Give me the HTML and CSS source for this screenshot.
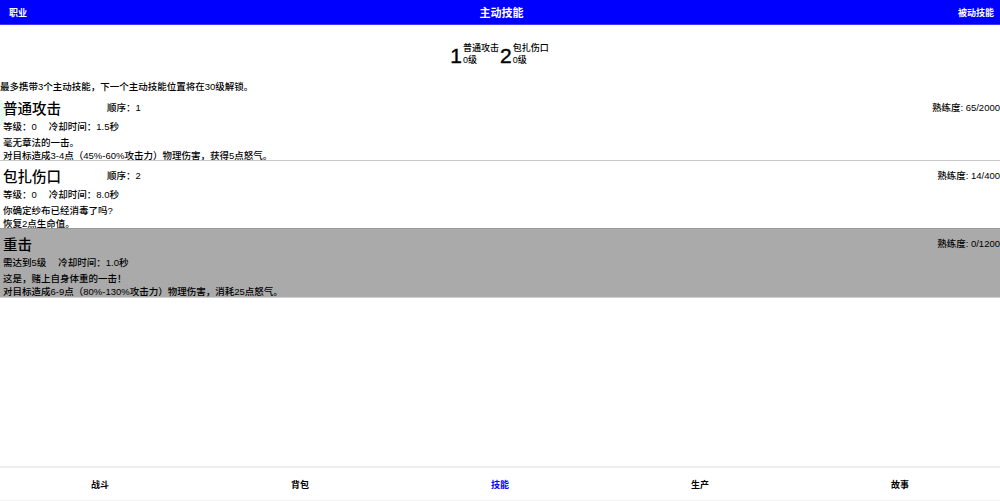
FILE: index.html
```html
<!DOCTYPE html>
<html lang="zh">
<head>
<meta charset="utf-8">
<link rel="stylesheet" href="styles.css">
</head>
<body>
<div class="app">
  <header class="topbar">
    <span class="tb-side">职业</span>
    <span class="tb-title">主动技能</span>
    <span class="tb-side">被动技能</span>
  </header>
  <div class="slots">
    <div class="slot">
      <span class="slot-num">1</span>
      <span class="slot-info"><span class="slot-name">普通攻击</span><span class="slot-lv">0级</span></span>
    </div>
    <div class="slot">
      <span class="slot-num">2</span>
      <span class="slot-info"><span class="slot-name">包扎伤口</span><span class="slot-lv">0级</span></span>
    </div>
  </div>
  <p class="notice">最多携带3个主动技能，下一个主动技能位置将在30级解锁。</p>
  <div class="skills">
    <section class="skill">
      <span class="ripple"></span>
      <div class="skill-head">
        <span class="skill-name">普通攻击</span>
        <span class="skill-order">顺序：1</span>
        <span class="skill-exp">熟练度: 65/2000</span>
      </div>
      <div class="skill-meta"><span>等级：0</span><span>冷却时间：1.5秒</span></div>
      <div class="skill-desc">毫无章法的一击。</div>
      <div class="skill-desc">对目标造成3-4点（45%-60%攻击力）物理伤害，获得5点怒气。</div>
    </section>
    <section class="skill">
      <div class="skill-head">
        <span class="skill-name">包扎伤口</span>
        <span class="skill-order">顺序：2</span>
        <span class="skill-exp">熟练度: 14/400</span>
      </div>
      <div class="skill-meta"><span>等级：0</span><span>冷却时间：8.0秒</span></div>
      <div class="skill-desc">你确定纱布已经消毒了吗?</div>
      <div class="skill-desc">恢复2点生命值。</div>
    </section>
    <section class="skill locked">
      <div class="skill-head">
        <span class="skill-name">重击</span>
        <span class="skill-order"></span>
        <span class="skill-exp">熟练度: 0/1200</span>
      </div>
      <div class="skill-meta"><span>需达到5级</span><span>冷却时间：1.0秒</span></div>
      <div class="skill-desc">这是，赌上自身体重的一击！</div>
      <div class="skill-desc">对目标造成6-9点（80%-130%攻击力）物理伤害，消耗25点怒气。</div>
    </section>
  </div>
  <nav class="tabbar">
    <span class="tab">战斗</span>
    <span class="tab">背包</span>
    <span class="tab active">技能</span>
    <span class="tab">生产</span>
    <span class="tab">故事</span>
  </nav>
</div>
</body>
</html>
```

FILE: styles.css
```css
* { box-sizing: border-box; margin: 0; padding: 0; }
html, body { height: 100%; }
body {
  font-family: "Liberation Sans", "Noto Sans CJK SC", sans-serif;
  color: #000;
  background: #fff;
  font-size: 9.5px;
  font-weight: 500;
}
.app {
  height: 501px;
  display: flex;
  flex-direction: column;
}
.topbar {
  height: 25px;
  background: #0000ff;
  border-bottom: 1px solid #3a3aff;
  display: flex;
  align-items: center;
  justify-content: space-between;
  padding: 0 9px;
  color: #fff;
  font-weight: bold;
}
.tb-side { font-size: 9px; width: 60px; }
.tb-side:last-child { text-align: right; margin-right: -3px; }
.tb-title { font-size: 11px; }
.slots {
  height: 56px;
  display: flex;
  justify-content: center;
  align-items: center;
  padding-top: 2px;
}
.slot { display: flex; align-items: center; }
.slot-num { font-size: 21px; line-height: 1; margin-top: 2px; font-weight: 500; -webkit-text-stroke: 0.4px #000; }
.slot-info { display: flex; flex-direction: column; font-size: 9px; line-height: 12px; margin-left: 1px; margin-right: 1px; }
.notice { line-height: 12px; height: 12px; }
.skills { flex: 0 0 auto; }
.skill {
  position: relative;
  height: 68px;
  padding: 4px 0 0 3px;
  border-bottom: 1px solid #c8c8c8;
  overflow: hidden;
}
.skill.locked { background: #aaaaaa; border-top: 1px solid #999; border-bottom: 1px solid #d0d0d0; height: 70px; margin-top: -1px; }
.ripple {
  position: absolute;
  left: -14px;
  top: 5px;
  width: 20px;
  height: 30px;
  border-radius: 50%;
  background: rgba(150, 240, 200, 0.25);
}
.skill-head { display: flex; align-items: center; height: 20px; }
.skill-name { font-size: 14.5px; width: 104px; }
.skill-order { flex: 1; }
.skill-exp { }
.skill-meta { margin-top: 4px; line-height: 12px; display: flex; gap: 12px; }
.skill-desc { line-height: 13px; }
.skill-meta + .skill-desc { margin-top: 3px; }
.tabbar {
  margin-top: auto;
  height: 35px;
  border-top: 2px solid #eeeeee;
  border-bottom: 1px solid #f4f4f4;
  display: grid;
  grid-template-columns: repeat(5, 1fr);
  align-items: center;
  justify-items: center;
  font-weight: bold;
  font-size: 9px;
}
.tab.active { color: #0000ff; }
```
